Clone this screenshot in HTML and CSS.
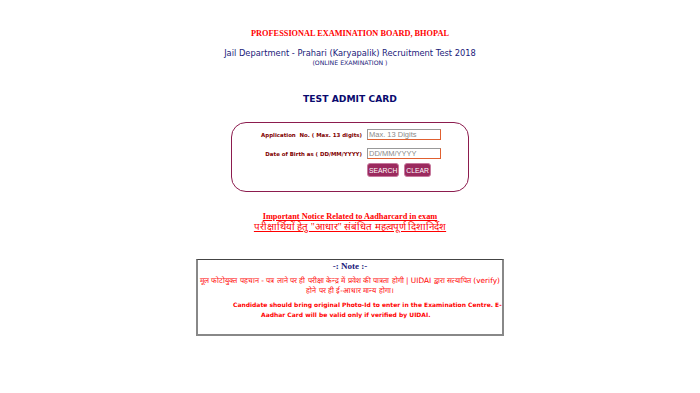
FILE: index.html
```html
<!DOCTYPE html>
<html>
  <head>
    <title>Test Admit Card</title>
    <link rel="stylesheet" href="styles.css">
  </head>
  <body>
    <div id="page">
      <div class="board">PROFESSIONAL EXAMINATION BOARD, BHOPAL</div>
      <div class="exam-name">Jail Department - Prahari (Karyapalik) Recruitment Test 2018</div>
      <div class="exam-mode">(ONLINE EXAMINATION )</div>

      <h1>TEST ADMIT CARD</h1>

      <form id="admit-form">
        <div class="row">
          <label for="app-no">Application&nbsp; No. ( Max. 13 digits)</label>
          <input type="text" id="app-no" placeholder="Max. 13 Digits" />
        </div>
        <div class="row">
          <label for="dob">Date of Birth as ( DD/MM/YYYY)</label>
          <input type="text" id="dob" placeholder="DD/MM/YYYY" />
        </div>
        <div class="row">
          <span class="spacer"></span>
          <div class="buttons">
            <button type="submit">SEARCH</button>
            <button type="reset">CLEAR</button>
          </div>
        </div>
      </form>

      <div class="notice">
        <a href="#" class="notice-en">Important Notice Related to Aadharcard in exam</a>
        <a href="#" class="notice-hi">परीक्षार्थियों हेतु "आधार" संबंधित महत्वपूर्ण दिशानिर्देश</a>
      </div>

      <div id="note-box">
        <div class="note-title">-: Note :-</div>
        <p class="note-hi">मूल फोटोयुक्त पहचान - पत्र लाने पर ही परीक्षा केन्द्र में प्रवेश की पात्रता होगी | UIDAI द्वारा सत्यापित (verify) होने पर ही ई-आधार मान्य होगा।</p>
        <p class="note-en">Candidate should bring original Photo-Id to enter in the Examination Centre. E-<br>Aadhar Card will be valid only if verified by UIDAI.</p>
      </div>
    </div>
  </body>
</html>
```

FILE: styles.css
```css
body {
  margin: 0;
  background-color: #ffffff;
  font-family: "DejaVu Sans", Verdana, sans-serif;
}

#page {
  width: 700px;
  padding-top: 28px;
  display: flex;
  flex-direction: column;
  align-items: center;
}

.board {
  font-family: "Liberation Serif", "Times New Roman", serif;
  font-weight: bold;
  font-size: 8.3px;
  line-height: 12px;
  color: #ff0000;
}

.exam-name {
  margin-top: 7px;
  font-size: 8.3px;
  line-height: 12px;
  color: #1a1a7a;
}

.exam-mode {
  font-size: 6.2px;
  line-height: 8px;
  color: #1a1a7a;
}

h1 {
  margin: 26px 0 0 0;
  font-size: 9.2px;
  line-height: 12px;
  font-weight: bold;
  color: #0a0a6e;
}

#admit-form {
  margin-top: 17px;
  width: 238px;
  height: 70px;
  box-sizing: border-box;
  border: 1px solid #8c1c4e;
  border-radius: 15px;
  padding-top: 2px;
}

.row {
  display: flex;
  align-items: center;
  height: 19px;
}

.row:last-child {
  align-items: flex-start;
}

.row label,
.spacer {
  width: 130px;
  padding-right: 5px;
  text-align: right;
  font-size: 5.45px;
  font-weight: bold;
  color: #800000;
  white-space: nowrap;
}

input {
  width: 74px;
  height: 11px;
  box-sizing: border-box;
  padding: 0 1px;
  margin: 0;
  font-family: "Liberation Sans", Arial, sans-serif;
  font-size: 7.5px;
  border: 1px solid #e06030;
  border-top-color: #999999;
  border-left-color: #999999;
}

input::placeholder {
  color: #8a8a8a;
}

.buttons {
  display: flex;
  gap: 5px;
}

button {
  background-color: #9b2a5e;
  color: #ffffff;
  border: 1px solid #c77a9e;
  border-radius: 3px;
  padding: 0 1px;
  height: 14px;
  font-family: "Liberation Sans", Arial, sans-serif;
  font-size: 6.8px;
  cursor: pointer;
}

.notice {
  margin-top: 20px;
  display: flex;
  flex-direction: column;
  align-items: center;
}

.notice a {
  color: #ff0000;
  font-family: "Liberation Serif", "Times New Roman", serif;
  text-decoration: underline;
}

.notice-en {
  font-size: 8.3px;
  font-weight: bold;
  line-height: 10px;
}

.notice-hi {
  font-size: 9.8px;
  line-height: 10px;
}

#note-box {
  margin-top: 27px;
  width: 308px;
  height: 77px;
  box-sizing: border-box;
  border: 1px solid #444444;
  border-right: 2px solid #888888;
  border-bottom: 2px solid #888888;
  border-left: 2px solid #888888;
  text-align: center;
}

.note-title {
  margin-top: 1px;
  font-family: "Liberation Serif", "Times New Roman", serif;
  font-weight: bold;
  font-size: 9px;
  line-height: 10px;
  color: #1a1a7a;
}

.note-hi {
  margin: 5px 0 0 0;
  font-size: 7.4px;
  line-height: 10px;
  color: #ff0000;
}

.note-en {
  margin: 4px 0 0 63px;
  text-indent: -28px;
  font-size: 6px;
  font-weight: bold;
  line-height: 10px;
  color: #ff0000;
  text-align: left;
  white-space: nowrap;
}
```
